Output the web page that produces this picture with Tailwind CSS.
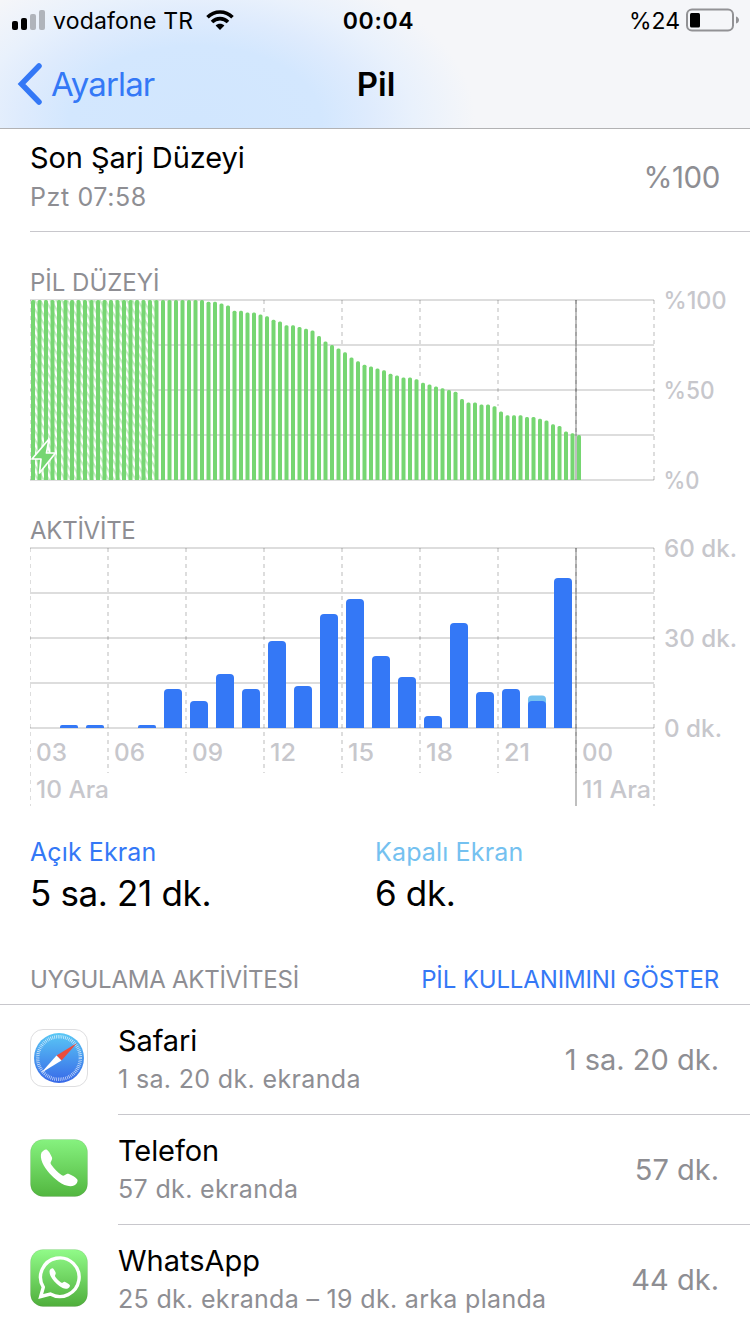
<!DOCTYPE html>
<html lang="tr">
<head>
  <meta charset="UTF-8" />
  <meta name="viewport" content="width=device-width, initial-scale=1.0" />
  <title>Pil</title>
  <script src="https://cdn.jsdelivr.net/npm/@tailwindcss/browser@4"></script>
</head>
<body class="w-[750px] h-[1334px] overflow-hidden bg-white text-black font-['Inter',sans-serif]">

  <!-- Header -->
  <header class="h-[129px] border-b border-[#b2b2b4] bg-[#f5f6f9] bg-[radial-gradient(ellipse_280px_165px_at_195px_120px,#d1e6fe_0%,#d3e7fe_45%,#deebfd_62%,#e9f1fc_78%,#f5f6f900_100%)]">
    <div class="grid grid-cols-3 items-center h-10 px-3 text-[23px]">
      <div class="flex items-center">
        <svg class="w-[34px] h-5" viewBox="0 0 34 20">
          <rect x="0" y="11" width="6" height="9" rx="2" />
          <rect x="9" y="8" width="6" height="12" rx="2" />
          <rect x="18" y="4" width="6" height="16" rx="2" fill="#b0b4bb" />
          <rect x="27" y="0" width="6" height="20" rx="2" fill="#b0b4bb" />
        </svg>
        <span class="ml-[7px] pt-0.5 tracking-[0.2px] whitespace-nowrap">vodafone TR</span>
        <svg class="ml-[13px] w-7 h-5 shrink-0" viewBox="0 0 28 20" fill="none" stroke="#000" stroke-width="3.6">
          <path d="M1.5 7.2C8.500 0.200 19.500 0.200 26.500 7.200" />
          <path d="M6 12C10.500 7.500 17.500 7.500 22 12" />
          <path d="M14 20L9.600 15.600C12 13.200 16 13.200 18.400 15.600Z" fill="#000" stroke="none" />
        </svg>
      </div>
      <div class="text-center font-semibold tracking-[0.7px] pl-[7px] pt-0.5">00:04</div>
      <div class="flex items-center justify-end">
        <span class="mr-[6px] pt-0.5">%24</span>
        <svg class="w-[54px] h-6 -mr-0.5" viewBox="0 0 54 24">
          <rect x="1" y="1.500" width="46" height="21" rx="5" fill="none" stroke="#929295" stroke-width="2" />
          <rect x="4" y="5" width="10" height="14.500" rx="1.500" />
          <path d="M50 8.500C54 9.500 54 14.500 50 15.500Z" fill="#929295" />
        </svg>
      </div>
    </div>
    <nav class="grid grid-cols-3 items-center h-[88px] text-[33px]">
      <a class="flex items-center text-[#3478f6]">
        <svg class="ml-[17px] w-[26px] h-[42px]" viewBox="0 0 26 42" fill="none" stroke="#3478f6" stroke-width="5.500" stroke-linecap="round" stroke-linejoin="miter">
          <path d="M22 3L4.500 21L22 39" />
        </svg>
        <span class="ml-2 pt-0.5 tracking-[-0.85px]">Ayarlar</span>
      </a>
      <h1 class="text-center font-semibold pt-0.5 pl-0.5">Pil</h1>
    </nav>
  </header>

  <!-- Last charge -->
  <div class="ml-[30px] pr-[30px] pt-[9px] pb-[13px] flex items-center justify-between border-b border-[#c8c7cc]">
    <div class="leading-[40px]">
      <p class="text-[29px] tracking-[-0.1px]">Son Şarj Düzeyi</p>
      <p class="text-[25px] -mt-px mb-px tracking-[0.6px] text-[#8e8e93]">Pzt 07:58</p>
    </div>
    <p class="text-[29.5px] -mt-[2px] tracking-[-0.4px] text-[#8e8e93]">%100</p>
  </div>

  <!-- Charts -->
  <section class="pt-[33px] pl-[30px] text-[#8e8e93]">
    <h2 class="text-[24px] leading-[34px] relative top-px">PİL DÜZEYİ</h2>
    <svg class="block w-[720px] h-[215px] overflow-visible" viewBox="30 299 720 215">
      <defs>
        <pattern id="hatch" width="4.600" height="8" patternUnits="userSpaceOnUse" patternTransform="rotate(-32)">
          <rect width="4.600" height="8" fill="#c5edc3" />
          <rect width="2.500" height="8" fill="#fff" />
        </pattern>
      </defs>
      <g id="battery-grid" stroke="#000" stroke-opacity=".135" stroke-width="2"></g>
      <g id="battery-bars" fill="#76d672"></g>
      <path d="M576 300V480" stroke="#000" stroke-opacity=".25" stroke-width="2" />
      <path d="M49 439L32 459H41L39.500 473L55.500 453H46.500Z" fill="#76d672" stroke="#fff" stroke-width="1.700" stroke-linejoin="round" />
      <g class="text-[24px] font-medium" fill="#c7c7cc">
        <text x="663.5" y="309" textLength="63" lengthAdjust="spacingAndGlyphs">%100</text>
        <text x="663.5" y="399" textLength="51" lengthAdjust="spacingAndGlyphs">%50</text>
        <text x="663.5" y="489" textLength="36" lengthAdjust="spacingAndGlyphs">%0</text>
      </g>
    </svg>

    <h2 class="text-[24px] leading-[34px] tracking-[-0.25px]">AKTİVİTE</h2>
    <svg class="block w-[720px] h-[287px] overflow-visible" viewBox="30 548 720 287">
      <g id="activity-grid" stroke="#000" stroke-opacity=".135" stroke-width="2"></g>
      <path d="M576 548V806" stroke="#000" stroke-opacity=".25" stroke-width="2" />
      <g id="activity-bars" fill="#3478f6"></g>
      <g class="text-[24px] font-medium" fill="#c7c7cc">
        <text x="664" y="557" textLength="73" lengthAdjust="spacingAndGlyphs">60 dk.</text>
        <text x="664" y="647" textLength="73" lengthAdjust="spacingAndGlyphs">30 dk.</text>
        <text x="664" y="737" textLength="58" lengthAdjust="spacingAndGlyphs">0 dk.</text>
        <text x="36" y="761" textLength="31" lengthAdjust="spacingAndGlyphs">03</text>
        <text x="114" y="761" textLength="31" lengthAdjust="spacingAndGlyphs">06</text>
        <text x="192" y="761" textLength="31" lengthAdjust="spacingAndGlyphs">09</text>
        <text x="270" y="761" textLength="26" lengthAdjust="spacingAndGlyphs">12</text>
        <text x="348" y="761" textLength="26" lengthAdjust="spacingAndGlyphs">15</text>
        <text x="426" y="761" textLength="27" lengthAdjust="spacingAndGlyphs">18</text>
        <text x="504" y="761" textLength="26" lengthAdjust="spacingAndGlyphs">21</text>
        <text x="582" y="761" textLength="31" lengthAdjust="spacingAndGlyphs">00</text>
        <text x="36" y="798" textLength="73" lengthAdjust="spacingAndGlyphs">10 Ara</text>
        <text x="582" y="798" textLength="69" lengthAdjust="spacingAndGlyphs">11 Ara</text>
      </g>
    </svg>
  </section>

  <!-- Screen on / off totals -->
  <section class="grid grid-cols-[345px_1fr] pl-[30px] h-[121px]">
    <div>
      <p class="text-[25px] leading-[34px] tracking-[0.1px] text-[#3478f6]">Açık Ekran</p>
      <p class="text-[35px] leading-[49px] tracking-[-0.35px]">5 sa. 21 dk.</p>
    </div>
    <div>
      <p class="text-[25px] leading-[34px] tracking-[0.15px] text-[#74c1f0]">Kapalı Ekran</p>
      <p class="text-[35px] leading-[49px] tracking-[-0.35px]">6 dk.</p>
    </div>
  </section>

  <!-- App list -->
  <div class="flex items-center justify-between h-[49px] pl-[30px] pr-[31px] text-[24px] border-b border-[#c8c7cc]">
    <h2 class="tracking-[-0.25px] text-[#8e8e93]">UYGULAMA AKTİVİTESİ</h2>
    <a class="tracking-[-0.13px] text-[#3478f6]">PİL KULLANIMINI GÖSTER</a>
  </div>

  <ul class="pl-[30px]">
    <li class="flex items-center">
      <svg class="w-[58px] h-[58px] mr-[30px] -mt-1" viewBox="0 0 58 58">
        <defs>
          <linearGradient id="safari" x2="0" y2="1"><stop stop-color="#5ac8f5" /><stop offset="1" stop-color="#3768e8" /></linearGradient>
        </defs>
        <rect x=".5" y=".5" width="57" height="57" rx="12.500" fill="#fff" stroke="#dedee0" />
        <circle cx="29" cy="29" r="25" fill="url(#safari)" />
        <circle cx="29" cy="29" r="21.300" fill="none" stroke="#fff" stroke-opacity=".7" stroke-width="3.400" stroke-dasharray=".8 1.059" />
        <path d="M47 14L31.500 31.500L26.500 26.500Z" fill="#eb4d3d" />
        <path d="M11 44L26.500 26.500L31.500 31.500Z" fill="#fff" />
      </svg>
      <div class="flex-1 flex items-center justify-between py-4 pr-[31px] border-b border-[#c8c7cc]">
        <div>
          <p class="text-[29px] leading-[39px] tracking-[-0.1px]">Safari</p>
          <p class="text-[25px] leading-[38px] tracking-[0.35px] text-[#8e8e93]">1 sa. 20 dk. ekranda</p>
        </div>
        <p class="text-[29px] text-[#8e8e93]">1 sa. 20 dk.</p>
      </div>
    </li>
    <li class="flex items-center">
      <svg class="w-[58px] h-[58px] mr-[30px] -mt-1" viewBox="0 0 58 58">
        <defs>
          <linearGradient id="phone" x2="0" y2="1"><stop stop-color="#86f27f" /><stop offset="1" stop-color="#52b63f" /></linearGradient>
        </defs>
        <rect x=".5" y=".5" width="57" height="57" rx="12.500" fill="url(#phone)" stroke="#000" stroke-opacity=".08" />
        <path d="M11.500 13.500C13 11.500 15 10 16.500 10.500C18.500 11.500 20.500 15 22 18.500C22.500 20 21.500 21.500 20.700 23.200C20.400 24 20.700 25 21.500 26C24 29.500 28 33.500 31.500 36C32.700 36.800 33.700 36.800 34.500 36.300C36 35.200 37.500 34.500 39 35C42.500 36.500 46 38.500 47.300 40.500C48.300 42.500 46.500 45 44.500 46.300C40 48.500 34 46.500 28.500 42.500C22 37.800 15.500 30.500 12.500 24C10.800 20 10.300 16 11.500 13.500Z" fill="#fff" />
      </svg>
      <div class="flex-1 flex items-center justify-between py-4 pr-[31px] border-b border-[#c8c7cc]">
        <div>
          <p class="text-[29px] leading-[39px] tracking-[-0.1px]">Telefon</p>
          <p class="text-[25px] leading-[38px] tracking-[0.35px] text-[#8e8e93]">57 dk. ekranda</p>
        </div>
        <p class="text-[29px] text-[#8e8e93]">57 dk.</p>
      </div>
    </li>
    <li class="flex items-center">
      <svg class="w-[58px] h-[58px] mr-[30px] -mt-1" viewBox="0 0 58 58">
        <defs>
          <linearGradient id="whatsapp" x2="0" y2="1"><stop stop-color="#91fb89" /><stop offset="1" stop-color="#4fae3b" /></linearGradient>
        </defs>
        <rect x=".5" y=".5" width="57" height="57" rx="12.500" fill="url(#whatsapp)" stroke="#000" stroke-opacity=".08" />
        <path d="M10.700 47.500L13.300 38.200A19.300 19.300 0 1 1 20.300 45Z" fill="none" stroke="#fff" stroke-width="3.400" stroke-linejoin="miter" />
        <path transform="translate(13.500 13.500) scale(.555)" d="M11.500 13.500C13 11.500 15 10 16.500 10.500C18.500 11.500 20.500 15 22 18.500C22.500 20 21.500 21.500 20.700 23.200C20.400 24 20.700 25 21.500 26C24 29.500 28 33.500 31.500 36C32.700 36.800 33.700 36.800 34.500 36.300C36 35.200 37.500 34.500 39 35C42.500 36.500 46 38.500 47.300 40.500C48.300 42.500 46.500 45 44.500 46.300C40 48.500 34 46.500 28.500 42.500C22 37.800 15.500 30.500 12.500 24C10.800 20 10.300 16 11.500 13.500Z" fill="#fff" />
      </svg>
      <div class="flex-1 flex items-center justify-between py-4 pr-[31px] border-b border-transparent">
        <div>
          <p class="text-[29px] leading-[39px]">WhatsApp</p>
          <p class="text-[25px] leading-[38px] tracking-[0.32px] text-[#8e8e93]">25 dk. ekranda – 19 dk. arka planda</p>
        </div>
        <p class="text-[29px] text-[#8e8e93]">44 dk.</p>
      </div>
    </li>
  </ul>

  <script>
    // battery level in percent, one value per bar
    const level = [...Array(27).fill(100),
      99, 99, 98, 97, 94, 94, 93, 93, 92, 91, 89, 88, 86, 86, 85, 84, 83, 80, 77, 75, 73, 71, 68, 66,
      64, 63, 62, 61, 59, 58, 57, 57, 56, 54, 53, 52, 51, 50, 49, 45, 43, 43, 42, 42, 41, 38,
      36, 36, 36, 35, 35, 34, 33, 31, 30, 27, 26, 25];
    // minutes of use per hour
    const screenOn = [0, 1, 1, 0, 1, 13, 9, 18, 13, 29, 14, 38, 43, 24, 17, 4, 35, 12, 13, 9, 50];
    const screenOff = { 19: 2 };

    // ends: y where each dashed vertical stops
    function grid(id, top, ends) {
      let out = '';
      for (let i = 0; i < 5; i++) {
        out += `<path d="M30 ${top + i * 45}H654"/>`;
      }
      ends.forEach((end, i) => {
        out += `<path d="M${i ? 30 + i * 78 : 30.5} ${top}V${end}" stroke-dasharray="4" stroke-width="${i ? 2 : 1}"/>`;
      });
      document.getElementById(id).innerHTML = out;
    }

    function bar(x, y, w, r, bottom, fill) {
      return `<path d="M${x} ${bottom}V${y + r}Q${x} ${y} ${x + r} ${y}H${x + w - r}Q${x + w} ${y} ${x + w} ${y + r}V${bottom}Z"${fill ? ` fill="${fill}"` : ''}/>`;
    }

    // battery verticals stop at the top of the bars
    grid('battery-grid', 300, [480, 300, 300, 314, 348, 378, 406, 433, 480]);
    grid('activity-grid', 548, [806, 773, 773, 773, 773, 773, 773, 773, 806]);

    let bars = '<rect x="31" y="300" width="127" height="180" fill="url(#hatch)"/>';
    level.forEach((v, i) => { bars += bar(31 + i * 6.5, 480 - v * 1.8, 4, 1.5, 480); });
    document.getElementById('battery-bars').innerHTML = bars;

    bars = '';
    screenOn.forEach((m, i) => {
      if (!m) return;
      const x = 34 + i * 26, y = 728 - m * 3;
      if (screenOff[i]) bars += bar(x, y - screenOff[i] * 2.8, 18, 4, 728, '#74c1f0');
      bars += bar(x, y, 18, m > 1 ? 4 : 2, 728);
    });
    document.getElementById('activity-bars').innerHTML = bars;
  </script>
</body>
</html>
